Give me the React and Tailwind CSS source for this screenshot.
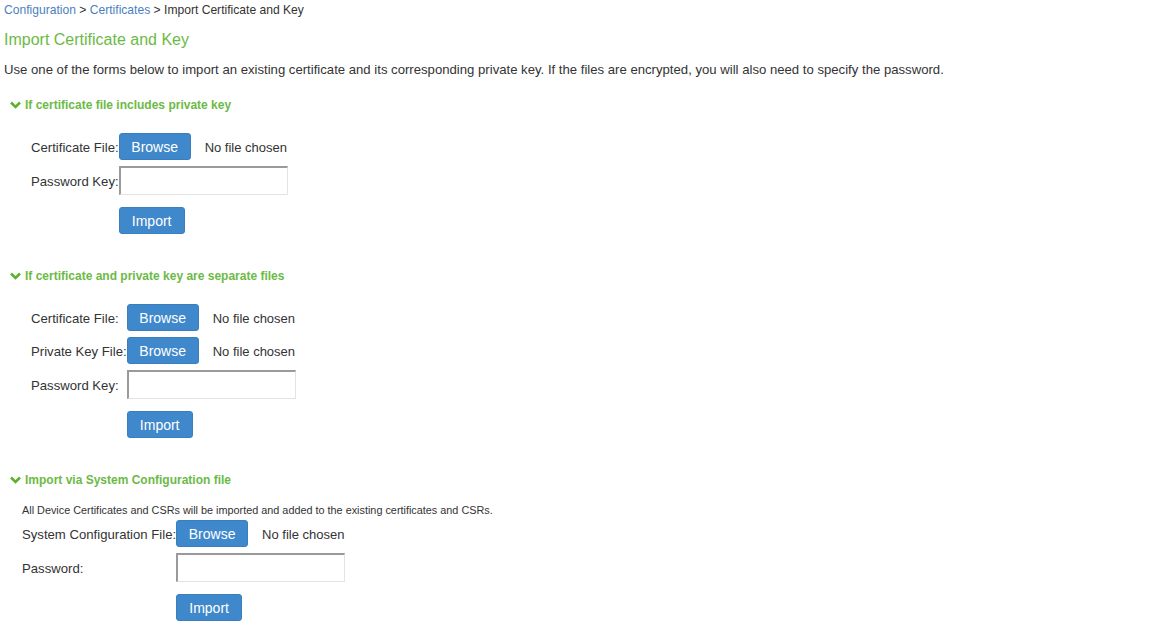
import React from 'react';

const Chevron = () => (
    <svg width="11" height="8" viewBox="0 0 11 8" className="mr-[4px] shrink-0">
        <path d="M1 1.5 L5.5 6 L10 1.5" fill="none" stroke="#5cb130" strokeWidth="2.6" strokeLinecap="butt" />
    </svg>
);

const SectionHeader = ({ children, className = '' }) => (
    <div className={`flex items-center h-5 pl-[10px] pt-[2px] text-[12px] font-bold text-[#6cba46] ${className}`}>
        <Chevron />
        {children}
    </div>
);

const BlueButton = ({ children, width }) => (
    <button
        type="button"
        className={`h-[27px] ${width} rounded-[3px] bg-[#3f88cb] border border-[#3a7fbd] text-white text-[14px] leading-none`}
    >
        {children}
    </button>
);

const FileRow = ({ label }) => (
    <>
        <div className="text-[13.15px] text-[#333] leading-[29px] h-[27px]">{label}</div>
        <div className="flex items-center h-[27px]">
            <BlueButton width="w-[72px]">Browse</BlueButton>
            <span className="ml-[14px] pt-[2px] text-[13px] text-[#333]">No file chosen</span>
        </div>
    </>
);

const PasswordRow = ({ label }) => (
    <>
        <div className="text-[13.15px] text-[#333] leading-[31px] h-[29px]">{label}</div>
        <div>
            <input
                type="password"
                className="h-[29px] w-[169px] border border-t-[#9a9a9a] border-l-[#9a9a9a] border-b-[#e3e3e3] border-r-[#e3e3e3] border-t-2 border-l-2 bg-white outline-none"
            />
        </div>
    </>
);

const ImportRow = () => (
    <>
        <div className="mt-[6px]" />
        <div className="mt-[6px]">
            <BlueButton width="w-[66px]">Import</BlueButton>
        </div>
    </>
);

export default function App() {
    return (
        <div className="w-[1171px] h-[627px] bg-white overflow-hidden" style={{ fontFamily: '"Liberation Sans", Arial, sans-serif' }}>
            <div className="pl-[4px] h-5 leading-5 text-[12.1px] text-[#333]">
                <span className="text-[#4a7fc0]">Configuration</span>
                {' > '}
                <span className="text-[#4a7fc0]">Certificates</span>
                {' > '}
                Import Certificate and Key
            </div>

            <h1 className="mt-[10px] pl-[4px] h-5 leading-5 text-[16px] text-[#6cba46]">Import Certificate and Key</h1>

            <p className="mt-[10px] pl-[4px] h-5 leading-5 text-[13.15px] text-[#333]">
                Use one of the forms below to import an existing certificate and its corresponding private key. If the files are encrypted, you will also need to specify the password.
            </p>

            {/* includes private key */}
            <SectionHeader className="mt-[14px]">If certificate file includes private key</SectionHeader>
            <div className="mt-[19px] ml-[31px] grid grid-cols-[auto_auto] justify-start gap-y-[6px]">
                <FileRow label="Certificate File:" />
                <PasswordRow label="Password Key:" />
                <ImportRow />
            </div>

            {/* separate files */}
            <SectionHeader className="mt-[31px]">If certificate and private key are separate files</SectionHeader>
            <div className="mt-[19px] ml-[31px] grid grid-cols-[auto_auto] justify-start gap-y-[6px]">
                <FileRow label="Certificate File:" />
                <FileRow label="Private Key File:" />
                <PasswordRow label="Password Key:" />
                <ImportRow />
            </div>

            {/* system configuration */}
            <SectionHeader className="mt-[31px]">Import via System Configuration file</SectionHeader>
            <div className="mt-[14px] ml-[22px] h-[14px] leading-[14px] text-[10.85px] text-[#333]">
                All Device Certificates and CSRs will be imported and added to the existing certificates and CSRs.
            </div>
            <div className="mt-[3px] ml-[22px] grid grid-cols-[auto_auto] justify-start gap-y-[6px]">
                <FileRow label="System Configuration File:" />
                <PasswordRow label="Password:" />
                <ImportRow />
            </div>
        </div>
    );
}
